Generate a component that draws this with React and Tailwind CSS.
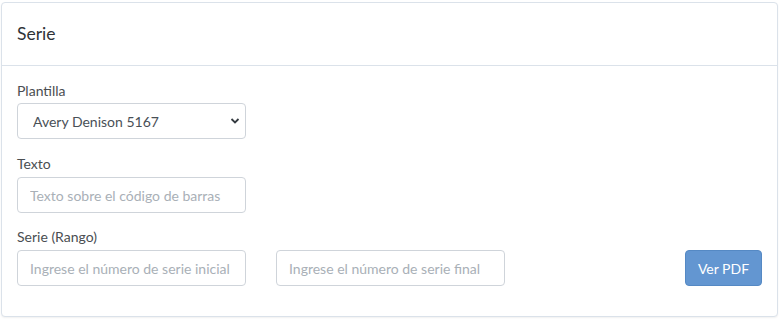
import React, { useState } from 'react';

const inputClass =
  'h-[36px] w-[229px] rounded-[4px] border border-[#cfd4da] bg-white px-[12px] text-[14px] text-[#495057] placeholder:text-[#a9b0b7] focus:outline-none';

const App = () => {
  const [plantilla, setPlantilla] = useState('5167');

  return (
    <div className="min-h-[320px] bg-white pt-[2px] pl-[1px]" style={{ fontFamily: 'Lato, "Open Sans", sans-serif' }}>
      <div className="w-[777px] h-[315px] rounded-[4px] border border-[#dbe2ea] bg-white shadow-[0_1px_2px_rgba(0,0,0,0.06)]">
        <div className="h-[63px] border-b border-[#dbe2ea] px-[15px] flex items-center">
          <h2 className="text-[17.5px] text-[#2f3337]">Serie</h2>
        </div>

        <div className="px-[15px] pt-[15px]">
          <label className="block text-[14px] leading-[20px] text-[#4a4e52] mb-[2px]">Plantilla</label>
          <div className="relative w-[229px]">
            <select
              value={plantilla}
              onChange={(e) => setPlantilla(e.target.value)}
              className={inputClass + ' appearance-none pl-[15px] text-[#3d4246]'}
            >
              <option value="5167">Avery Denison 5167</option>
              <option value="5160">Avery Denison 5160</option>
            </select>
            <svg className="pointer-events-none absolute right-[6px] top-[14px]" width="10" height="8" viewBox="0 0 10 8">
              <path d="M1.5 2 L5 5.5 L8.5 2" fill="none" stroke="#343a40" strokeWidth="1.8" />
            </svg>
          </div>

          <label className="block text-[14px] leading-[20px] text-[#4a4e52] mt-[15px] mb-[3px]">Texto</label>
          <input type="text" placeholder="Texto sobre el código de barras" className={inputClass + ' block'} />

          <label className="block text-[14px] leading-[20px] text-[#4a4e52] mt-[14px] mb-[3px]">Serie (Rango)</label>
          <div className="flex items-center">
            <input type="text" placeholder="Ingrese el número de serie inicial" className={inputClass} />
            <input type="text" placeholder="Ingrese el número de serie final" className={inputClass + ' ml-[30px] w-[228px]'} />
            <button className="ml-auto h-[36px] w-[77px] rounded-[4px] border border-[#5589c4] bg-[#6396d1] text-[14px] text-white">
              Ver PDF
            </button>
          </div>
        </div>
      </div>
    </div>
  );
};

export default App;
